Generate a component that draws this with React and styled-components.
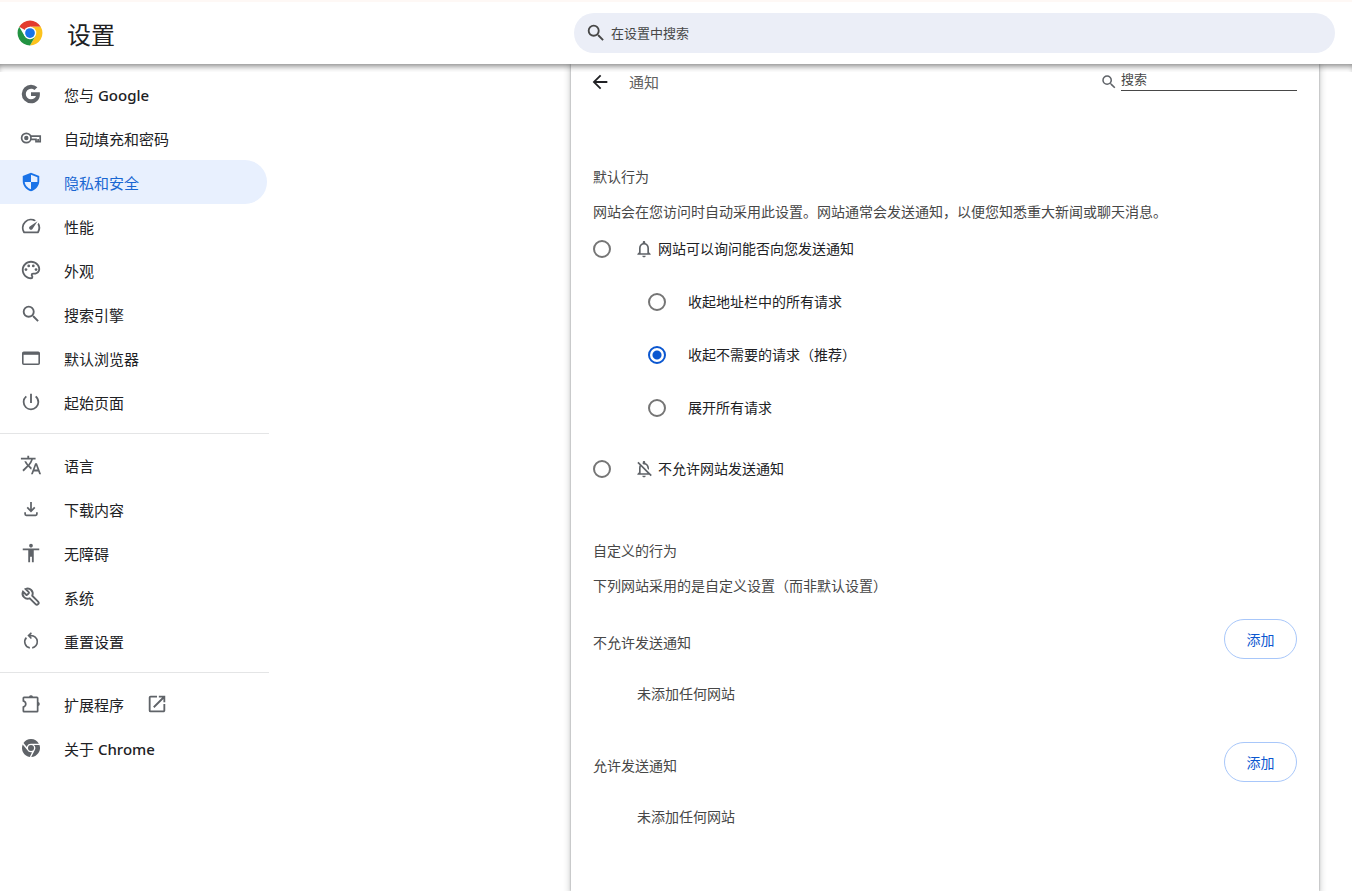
import React from 'react';
import styled, { createGlobalStyle } from 'styled-components';
import {
    MdSearch,
    MdSpeed,
    MdOutlinePalette,
    MdPowerSettingsNew,
    MdTranslate,
    MdAccessibility,
    MdOpenInNew,
    MdArrowBack,
    MdNotificationsNone,
    MdOutlineNotificationsOff,
} from 'react-icons/md';

const colors = {
    text: '#202124',
    secondary: '#474747',
    icon: '#5f6368',
    accent: '#0b57d0',
    selected: '#1a73e8',
    selectedText: '#1967d2',
    selectedBg: '#e8f0fe',
    searchBg: '#ebeef7',
    outline: '#a8c7fa',
    line: '#e4e5e6',
};

const GlobalStyle = createGlobalStyle`
    * {
        box-sizing: border-box;
    }

    html,
    body,
    #root {
        height: 100%;
    }

    body {
        margin: 0;
        background: #fff;
        color: ${colors.text};
        font-family: "Noto Sans", "Noto Sans CJK SC", sans-serif;
        font-size: 14px;
        line-height: 20px;
    }

    h1,
    h2,
    h3,
    p {
        margin: 0;
        font-weight: 400;
    }
`;

const Page = styled.div`
    display: flex;
    flex-direction: column;
    height: 100%;
    overflow: hidden;
`;

const Toolbar = styled.header`
    position: relative;
    display: flex;
    flex: none;
    align-items: center;
    z-index: 1;
    height: 64px;
    padding: 0 17px;
    border-top: 2px solid #fef8f5;
    background: #fff;

    /* shadow cast over the scrolled content */
    &::after {
        content: "";
        position: absolute;
        top: 100%;
        left: 0;
        right: 0;
        height: 8px;
        box-shadow: inset 0 5px 6px -3px rgba(0, 0, 0, 0.5);
        pointer-events: none;
    }
`;

const Brand = styled.div`
    display: flex;
    flex: 1;
    align-items: center;
    gap: 24px;
`;

const Title = styled.h1`
    padding-top: 4px;
    font-size: 24px;
    line-height: 32px;
`;

const SearchBox = styled.label`
    display: flex;
    align-items: center;
    gap: 4px;
    width: 761px;
    max-width: 60%;
    height: 40px;
    padding: 0 11px;
    border-radius: 20px;
    background: ${colors.searchBg};
    color: ${colors.secondary};

    svg {
        flex: none;
    }
`;

const SearchInput = styled.input`
    flex: 1;
    min-width: 0;
    padding: 0;
    border: 0;
    outline: 0;
    background: none;
    font-family: inherit;
    font-size: 13px;
    line-height: 20px;

    &::placeholder {
        color: ${colors.secondary};
        opacity: 1;
    }
`;

const Content = styled.div`
    display: flex;
    flex: 1;
    min-height: 0;
`;

const Sidebar = styled.nav`
    display: flex;
    flex: 0 0 269px;
    flex-direction: column;
    padding-top: 8px;
`;

const MenuItem = styled.a`
    display: flex;
    align-items: center;
    gap: 22px;
    width: 267px;
    height: 44px;
    padding: 0 20px;
    border-radius: 0 22px 22px 0;
    background: ${props => (props.$selected ? colors.selectedBg : 'none')};
    color: ${props => (props.$selected ? colors.selectedText : colors.text)};
    font-size: 15px;
    text-decoration: none;

    svg {
        flex: none;
        width: 22px;
        height: 22px;
        color: ${props => (props.$selected ? colors.selected : colors.icon)};
    }
`;

const MenuLabel = styled.span`
    padding-top: 2px;
`;

const ProductName = styled.span`
    font-weight: 500;
`;

const Separator = styled.hr`
    width: 100%;
    height: 1px;
    margin: 9px 0;
    border: 0;
    background: ${colors.line};
`;

const Main = styled.main`
    display: flex;
    flex: 1;
    justify-content: flex-end;
    padding-right: 33px;
`;

const Card = styled.section`
    width: 748px;
    max-width: 100%;
    padding: 0 22px;
    box-shadow: 0 0 2px rgba(60, 64, 67, 0.5), 0 2px 6px 2px rgba(60, 64, 67, 0.2);
`;

const CardHeader = styled.div`
    display: flex;
    align-items: center;
    height: 36px;
`;

const BackButton = styled.button`
    display: flex;
    margin-left: -4px;
    padding: 0;
    border: 0;
    background: none;
    color: ${colors.text};
`;

const CardTitle = styled.h2`
    flex: 1;
    padding-left: 18px;
    color: #5f5f5f;
    font-size: 15px;
`;

const SiteSearch = styled.label`
    display: flex;
    align-items: center;
    gap: 3px;
    color: ${colors.icon};
`;

const SiteSearchInput = styled(SearchInput)`
    flex: none;
    width: 176px;
    height: 22px;
    margin-bottom: 4px;
    padding-bottom: 2px;
    border-bottom: 1px solid ${colors.secondary};
`;

const Behavior = styled.div`
    padding-top: ${props => props.$top}px;
    color: ${colors.secondary};
`;

const Description = styled.p`
    padding-top: 15px;
`;

const Options = styled.div`
    display: flex;
    flex-direction: column;
    padding-top: 1px;
    color: ${colors.text};
`;

const NestedOptions = styled.div`
    display: flex;
    flex-direction: column;
    padding: 0 0 9px 55px;
`;

const Option = styled.label`
    display: flex;
    align-items: center;
    height: ${props => (props.$nested ? 53 : 52)}px;
`;

const Radio = styled.input`
    appearance: none;
    flex: none;
    width: 18px;
    height: 18px;
    margin: 0 ${props => (props.$nested ? 22 : 23)}px 0 0;
    border: 2px solid #757575;
    border-radius: 50%;

    &:checked {
        border-color: ${colors.accent};
        background: radial-gradient(circle, ${colors.accent} 4px, transparent 5px);
    }
`;

const OptionIcon = styled.span`
    display: flex;
    width: 24px;
    color: ${colors.icon};
`;

const SiteList = styled.section`
    padding-top: ${props => props.$top}px;
    color: ${colors.secondary};
`;

const SiteListHeader = styled.div`
    display: flex;
    align-items: center;
    justify-content: space-between;
    height: 40px;
`;

const SectionTitle = styled.h3`
    font-size: 14px;
`;

const SiteListTitle = styled(SectionTitle)`
    padding-top: 8px;
`;

const AddButton = styled.button`
    width: 73px;
    height: 40px;
    padding: 0;
    border: 1px solid ${colors.outline};
    border-radius: 20px;
    background: #fff;
    color: ${colors.accent};
    font-family: inherit;
    font-size: 14px;
`;

const EmptyText = styled.p`
    padding: 25px 0 0 44px;
`;

const ChromeLogo = () => (
    <svg width="26" height="26" viewBox="0 0 48 48" aria-hidden="true">
        <path fill="#e33b2e" d="M24 24 4.1 12.5A23 23 0 0 1 43.9 12.5H24z" />
        <path fill="#fcc31e" d="M24 12.5h19.9A23 23 0 0 1 24 47l10-17.3z" />
        <path fill="#229342" d="M4.1 12.5 14 29.7 24 35.5 34 29.7 24 47A23 23 0 0 1 4.1 12.5z" />
        <circle cx="24" cy="24" r="11.5" fill="#fff" />
        <circle cx="24" cy="24" r="9" fill="#1a73e8" />
    </svg>
);

const GoogleIcon = () => (
    <svg viewBox="-0.5 -0.5 19 19" fill="currentColor" aria-hidden="true">
        <path d="M16.58 7.5H9v3.2h4.3c-.4 1.7-2 2.800-4.300 2.800A4.500 4.500 0 0 1 4.500 9 4.500 4.500 0 0 1 9 4.500c1.200 0 2.200.4 3 1.100l2.500-2.400A8 8 0 0 0 9 1a8 8 0 1 0 0 16c4.600 0 7.680-3.250 7.680-7.820 0-.5-.04-1.100-.1-1.680z" />
    </svg>
);

const KeyIcon = () => (
    <svg viewBox="0 0 22 22" fill="none" stroke="currentColor" strokeWidth="1.7" aria-hidden="true">
        <circle cx="6.3" cy="11" r="4.7" />
        <circle cx="6.3" cy="11" r="2.2" fill="currentColor" stroke="none" />
        <path d="M10.6 9.2h9.6v5.4h-4.2v-2.2h-5.2M18.1 12v2.4" />
    </svg>
);

const ShieldIcon = () => (
    <svg viewBox="0 0 24 24" fill="currentColor" aria-hidden="true">
        <path d="M12 2 3 5.4v5.7c0 5 3.8 9.6 9 10.9 5.2-1.3 9-5.9 9-10.9V5.4zm0 2.2 7 2.6v5.2h-7zM5.1 12H12v7.9C8.4 18.8 5.6 15.6 5.1 12z" />
    </svg>
);

const BrowserIcon = () => (
    <svg viewBox="0 0 22 22" fill="none" stroke="currentColor" strokeWidth="1.6" aria-hidden="true">
        <rect x="2.8" y="5.3" width="16.4" height="12" rx="1" />
        <path d="M2.8 6.500h16.400" strokeWidth="2.600" />
    </svg>
);

const DownloadIcon = () => (
    <svg viewBox="-2 -2 28 28" fill="none" stroke="currentColor" strokeWidth="2.2" aria-hidden="true">
        <path d="M12 3v11.5M7.200 10 12 14.800 16.800 10M4.500 16v2.500q0 1.500 1.500 1.500h12q1.500 0 1.500-1.500V16" />
    </svg>
);

const WrenchIcon = () => (
    <svg viewBox="-1 -1 26 26" fill="none" stroke="currentColor" strokeWidth="2.2" aria-hidden="true">
        <path
            transform="matrix(-1 0 0 1 24 0)"
            d="M14.7 6.3a1 1 0 0 0 0 1.4l1.6 1.6a1 1 0 0 0 1.4 0l3.77-3.77a6 6 0 0 1-7.94 7.94l-6.91 6.91a2.12 2.12 0 0 1-3-3l6.91-6.91a6 6 0 0 1 7.94-7.94z"
        />
    </svg>
);

const ResetIcon = () => (
    <svg viewBox="0 0 22 22" fill="none" stroke="currentColor" strokeWidth="1.6" aria-hidden="true">
        <path d="M9 5.600h2a6.200 6.200 0 0 1 1.200 12.300M9.800 17.900A6.200 6.200 0 0 1 6.400 7.600M11.400 2.700 8.500 5.600l2.900 2.900" />
    </svg>
);

const PuzzleIcon = () => (
    <svg viewBox="0 0 22 22" fill="currentColor" aria-hidden="true">
        <path
            fillRule="evenodd"
            d="M4 3.5h5a2.2 2.2 0 0 1 4 0h4q1.5 0 1.5 1.5v4a2.2 2.2 0 0 1 0 4v5q0 1.5-1.5 1.5H4q-1.5 0-1.500-1.500v-4.500q2.500-.6 2.500-2.500T2.500 8.500V5q0-1.500 1.500-1.500zm.2 1.700v2q2.500 1.300 2.500 3.800t-2.500 3.800v3h12.600V5.200z"
        />
    </svg>
);

const ChromeIcon = () => (
    <svg viewBox="0 0 22 22" fill="currentColor" aria-hidden="true">
        <path d="M11 2a9 9 0 0 1 7.9 4.7H11a4.3 4.3 0 0 0-4.2 3.400L3.500 5.900A9 9 0 0 1 11 2z" />
        <path d="M2.700 7.500 7.200 13A4.300 4.300 0 0 0 12 15.200L9.800 19.900A9 9 0 0 1 2.700 7.500z" />
        <path d="M14 8h5.500A9 9 0 0 1 11.200 20l3.500-6.800A4.300 4.300 0 0 0 14 8z" />
        <circle cx="11" cy="11" r="3" />
    </svg>
);

const menu = [
    [
        { label: '您与 ', product: 'Google', icon: GoogleIcon },
        { label: '自动填充和密码', icon: KeyIcon },
        { label: '隐私和安全', icon: ShieldIcon, selected: true },
        { label: '性能', icon: MdSpeed },
        { label: '外观', icon: MdOutlinePalette },
        { label: '搜索引擎', icon: MdSearch },
        { label: '默认浏览器', icon: BrowserIcon },
        { label: '起始页面', icon: MdPowerSettingsNew },
    ],
    [
        { label: '语言', icon: MdTranslate },
        { label: '下载内容', icon: DownloadIcon },
        { label: '无障碍', icon: MdAccessibility },
        { label: '系统', icon: WrenchIcon },
        { label: '重置设置', icon: ResetIcon },
    ],
    [
        { label: '扩展程序', icon: PuzzleIcon, external: true },
        { label: '关于 ', product: 'Chrome', icon: ChromeIcon },
    ],
];

const prompts = [
    { id: 'quiet', label: '收起地址栏中的所有请求' },
    { id: 'recommended', label: '收起不需要的请求（推荐）', checked: true },
    { id: 'loud', label: '展开所有请求' },
];

const Menu = () => (
    <Sidebar>
        {menu.map((group, i) => (
            <React.Fragment key={i}>
                {i > 0 && <Separator />}
                {group.map(({ label, product, icon: Icon, selected, external }) => (
                    <MenuItem key={label} href="#" $selected={selected}>
                        <Icon />
                        <MenuLabel>
                            {label}
                            {product && <ProductName>{product}</ProductName>}
                        </MenuLabel>
                        {external && <MdOpenInNew />}
                    </MenuItem>
                ))}
            </React.Fragment>
        ))}
    </Sidebar>
);

const Sites = ({ title, top }) => (
    <SiteList $top={top}>
        <SiteListHeader>
            <SiteListTitle>{title}</SiteListTitle>
            <AddButton type="button">添加</AddButton>
        </SiteListHeader>
        <EmptyText>未添加任何网站</EmptyText>
    </SiteList>
);

const App = () => (
    <Page>
        <GlobalStyle />
        <Toolbar>
            <Brand>
                <ChromeLogo />
                <Title>设置</Title>
            </Brand>
            <SearchBox>
                <MdSearch size={22} />
                <SearchInput type="text" placeholder="在设置中搜索" aria-label="在设置中搜索" />
            </SearchBox>
        </Toolbar>
        <Content>
            <Menu />
            <Main>
                <Card>
                    <CardHeader>
                        <BackButton type="button" aria-label="返回">
                            <MdArrowBack size={22} />
                        </BackButton>
                        <CardTitle>通知</CardTitle>
                        <SiteSearch>
                            <MdSearch size={18} />
                            <SiteSearchInput type="text" placeholder="搜索" aria-label="搜索" />
                        </SiteSearch>
                    </CardHeader>
                    <Behavior $top={67}>
                        <SectionTitle>默认行为</SectionTitle>
                        <Description>网站会在您访问时自动采用此设置。网站通常会发送通知，以便您知悉重大新闻或聊天消息。</Description>
                    </Behavior>
                    <Options>
                        <Option>
                            <Radio type="radio" name="behavior" />
                            <OptionIcon><MdNotificationsNone size={20} /></OptionIcon>
                            网站可以询问能否向您发送通知
                        </Option>
                        <NestedOptions>
                            {prompts.map(({ id, label, checked }) => (
                                <Option key={id} $nested>
                                    <Radio type="radio" name="prompt" defaultChecked={checked} $nested />
                                    {label}
                                </Option>
                            ))}
                        </NestedOptions>
                        <Option>
                            <Radio type="radio" name="behavior" />
                            <OptionIcon><MdOutlineNotificationsOff size={20} /></OptionIcon>
                            不允许网站发送通知
                        </Option>
                    </Options>
                    <Behavior $top={46}>
                        <SectionTitle>自定义的行为</SectionTitle>
                        <Description>下列网站采用的是自定义设置（而非默认设置）</Description>
                    </Behavior>
                    <Sites title="不允许发送通知" top={23} />
                    <Sites title="允许发送通知" top={38} />
                </Card>
            </Main>
        </Content>
    </Page>
);

export default App;
